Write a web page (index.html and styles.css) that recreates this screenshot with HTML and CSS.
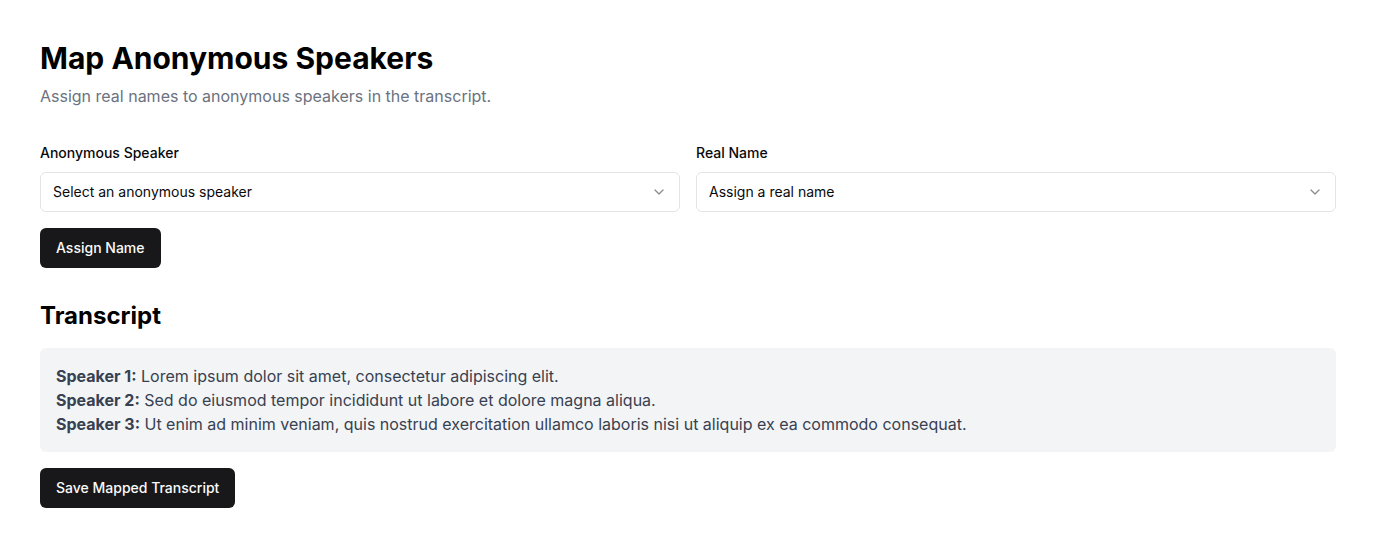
FILE: index.html
```html
<!DOCTYPE html>
<html>
<head>
<meta charset="utf-8">
<link rel="stylesheet" href="styles.css">
</head>
<body>
<main class="page">
  <h1 class="title">Map Anonymous Speakers</h1>
  <p class="subtitle">Assign real names to anonymous speakers in the transcript.</p>
  <div class="fields">
    <div class="field">
      <label class="label">Anonymous Speaker</label>
      <div class="select"><span>Select an anonymous speaker</span>
        <svg class="chev" viewBox="0 0 24 24" width="16" height="16"><path d="m6 9 6 6 6-6" fill="none" stroke="currentColor" stroke-width="2" stroke-linecap="round" stroke-linejoin="round"/></svg>
      </div>
    </div>
    <div class="field">
      <label class="label">Real Name</label>
      <div class="select"><span>Assign a real name</span>
        <svg class="chev" viewBox="0 0 24 24" width="16" height="16"><path d="m6 9 6 6 6-6" fill="none" stroke="currentColor" stroke-width="2" stroke-linecap="round" stroke-linejoin="round"/></svg>
      </div>
    </div>
  </div>
  <button class="btn">Assign Name</button>
  <h2 class="heading">Transcript</h2>
  <div class="transcript">
    <p><strong>Speaker 1:</strong> Lorem ipsum dolor sit amet, consectetur adipiscing elit.</p>
    <p><strong>Speaker 2:</strong> Sed do eiusmod tempor incididunt ut labore et dolore magna aliqua.</p>
    <p><strong>Speaker 3:</strong> Ut enim ad minim veniam, quis nostrud exercitation ullamco laboris nisi ut aliquip ex ea commodo consequat.</p>
  </div>
  <button class="btn">Save Mapped Transcript</button>
</main>
</body>
</html>
```
FILE: styles.css
```css
* { box-sizing: border-box; }
body { margin: 0; font-family: Inter, "Noto Sans", sans-serif; color: #000; background: #fff; }
.page { padding: 40px; display: flex; flex-direction: column; align-items: flex-start; }
.title { margin: 0; font-size: 30px; line-height: 36px; font-weight: 700; }
.subtitle { margin: 8px 0 0; font-size: 16px; line-height: 24px; color: #6b7280; }
.fields { margin-top: 35px; width: 100%; display: grid; grid-template-columns: 1fr 1fr; gap: 16px; }
.field { display: flex; flex-direction: column; }
.label { font-size: 14px; line-height: 20px; font-weight: 500; margin-bottom: 9px; color: #09090b; }
.select { height: 40px; border: 1px solid #e4e4e7; border-radius: 6px; padding: 0 12px 1px; display: flex; align-items: center; justify-content: space-between; font-size: 14px; color: #09090b; }
.chev { color: #71717a; opacity: 0.8; margin-right: 0; }
.btn { margin-top: 16px; height: 40px; padding: 0 16px 1px; border: 0; border-radius: 6px; background: #18181b; color: #fafafa; font-family: inherit; font-size: 14px; font-weight: 500; }
.heading { margin: 32px 0 16px; font-size: 24px; line-height: 32px; font-weight: 700; }
.transcript { width: 100%; background: #f3f4f6; border-radius: 6px; padding: 16px; color: #374151; font-size: 16px; line-height: 24px; }
.transcript p { margin: 0; }
.transcript strong { font-weight: 700; }
.transcript + .btn { margin-top: 16px; }
```
